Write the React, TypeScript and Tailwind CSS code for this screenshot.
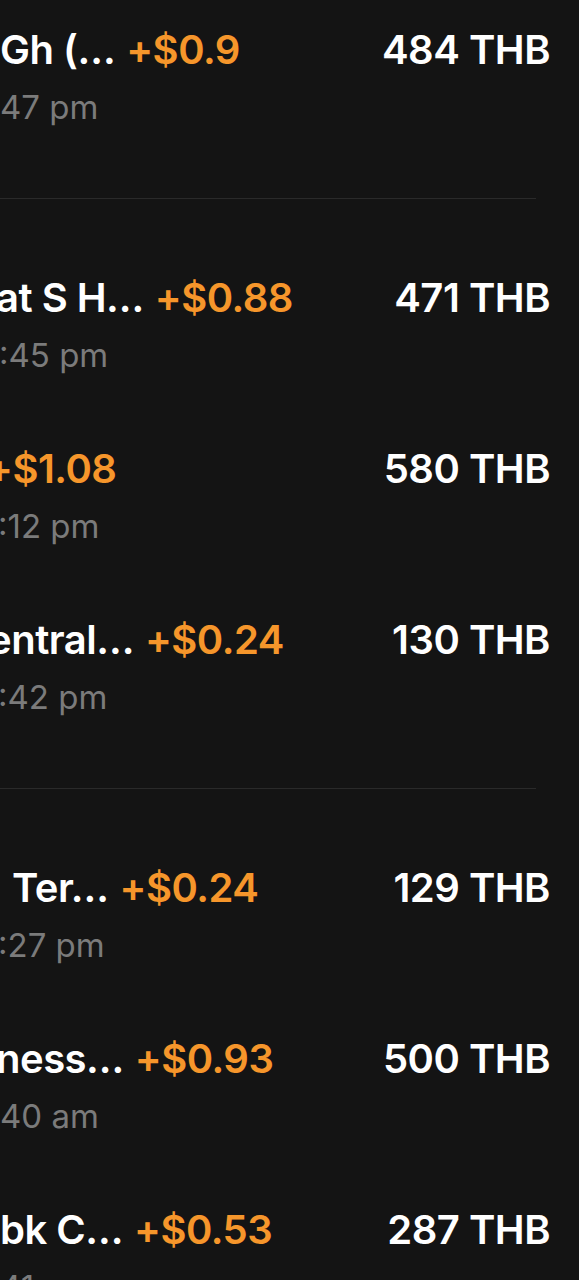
type Row = {
  title: string;
  bonus: string;
  time: string;
  amount: string;
  titleShift: number;
  timeShift: number;
};

const sections: Row[][] = [
  [{ title: "Gh (…", bonus: "+$0.9", time: "47 pm", amount: "484 THB", titleShift: 0, timeShift: 0 }],
  [
    { title: "at S H…", bonus: "+$0.88", time: ":45 pm", amount: "471 THB", titleShift: -4, timeShift: -1 },
    { title: "", bonus: "+$1.08", time: ":12 pm", amount: "580 THB", titleShift: -14, timeShift: -2 },
    { title: "entral…", bonus: "+$0.24", time: ":42 pm", amount: "130 THB", titleShift: -12, timeShift: -2 },
  ],
  [
    { title: "Ter…", bonus: "+$0.24", time: ":27 pm", amount: "129 THB", titleShift: 12, timeShift: -2 },
    { title: "ness…", bonus: "+$0.93", time: "40 am", amount: "500 THB", titleShift: -4, timeShift: 0 },
    { title: "bk C…", bonus: "+$0.53", time: "41 am", amount: "287 THB", titleShift: 0, timeShift: 0 },
  ],
];

function TxRow({ row }: { row: Row }) {
  return (
    <div className="flex h-[171px] items-start justify-between pt-[34px] pr-[29px]">
      <div className="flex flex-col whitespace-nowrap">
        <div
          className="flex gap-[11px] text-[40px] leading-[48px] font-semibold tracking-[-0.5px]"
          style={{ marginLeft: row.titleShift }}
        >
          {row.title && <span className="text-white">{row.title}</span>}
          <span className="text-[#f6962b]">{row.bonus}</span>
        </div>
        <p className="mt-[13px] text-[33px] leading-[40px] text-[#7b7b7b]" style={{ marginLeft: row.timeShift }}>
          {row.time}
        </p>
      </div>
      <p className="text-[40px] leading-[48px] font-semibold tracking-[-0.5px] text-white">{row.amount}</p>
    </div>
  );
}

export default function App() {
  return (
    <div
      className="h-[1280px] w-[579px] overflow-hidden bg-[#141414]"
      style={{ fontFamily: "Inter, 'Liberation Sans', sans-serif" }}
    >
      <div className="-mt-[8px]">
        {sections.map((rows, i) => (
          <div key={i}>
            {i > 0 && (
              <div className="pt-[35px] pb-[41px]">
                <div className="h-px w-[536px] bg-[#2a2a2a]" />
              </div>
            )}
            {rows.map((r, j) => (
              <TxRow key={j} row={r} />
            ))}
          </div>
        ))}
      </div>
    </div>
  );
}
